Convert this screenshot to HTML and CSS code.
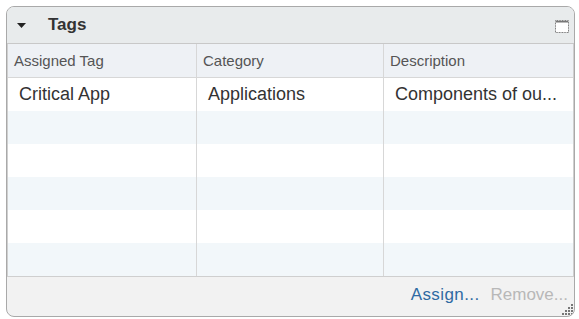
FILE: index.html
```html
<!DOCTYPE html>
<html lang="en">
<head>
  <meta charset="UTF-8">
  <title>Tags</title>
  <link rel="stylesheet" href="styles.css">
</head>
<body>
  <div class="panel">
    <div class="panel-head">
      <svg class="caret" width="9" height="5" viewBox="0 0 9 5"><path d="M0 0h9L4.5 5z" fill="#222"/></svg>
      <span class="title">Tags</span>
      <svg class="max" width="14" height="13" viewBox="0 0 14 13">
        <rect x="0.5" y="0.5" width="13" height="12" fill="#fff" stroke="#777" stroke-dasharray="1 0.6"/>
        <rect x="1" y="1" width="12" height="1.5" fill="#777"/>
      </svg>
    </div>
    <div class="grid">
      <div class="col-head">Assigned Tag</div>
      <div class="col-head">Category</div>
      <div class="col-head">Description</div>

      <div class="cell">Critical App</div>
      <div class="cell">Applications</div>
      <div class="cell">Components of ou...</div>

      <div class="cell alt"></div><div class="cell alt"></div><div class="cell alt"></div>
      <div class="cell"></div><div class="cell"></div><div class="cell"></div>
      <div class="cell alt"></div><div class="cell alt"></div><div class="cell alt"></div>
      <div class="cell"></div><div class="cell"></div><div class="cell"></div>
      <div class="cell alt"></div><div class="cell alt"></div><div class="cell alt"></div>
    </div>
    <div class="panel-foot">
      <a class="action">Assign...</a>
      <span class="action disabled">Remove...</span>
      <svg class="grip" width="12" height="12" viewBox="0 0 12 12" fill="#777">
        <rect x="10" y="1" width="2" height="2"/>
        <rect x="7" y="4" width="2" height="2"/><rect x="10" y="4" width="2" height="2"/>
        <rect x="4" y="7" width="2" height="2"/><rect x="7" y="7" width="2" height="2"/><rect x="10" y="7" width="2" height="2"/>
        <rect x="1" y="10" width="2" height="2"/><rect x="4" y="10" width="2" height="2"/><rect x="7" y="10" width="2" height="2"/><rect x="10" y="10" width="2" height="2"/>
      </svg>
    </div>
  </div>
</body>
</html>
```

FILE: styles.css
```css
body {
  margin: 0;
  padding: 6px 0 0 6px;
  background: #fff;
  font-family: "Liberation Sans", Arial, sans-serif;
  color: #333;
}
.panel {
  width: 567px;
  border: 1px solid #a9a9a9;
  border-radius: 8px;
  overflow: hidden;
  background: #f2f2f2;
}
.panel-head {
  height: 36px;
  display: flex;
  align-items: center;
  background: #e8ebec;
  border-bottom: 1px solid #c8c8c8;
  padding: 0 5px 0 10px;
}
.caret {
  margin-top: 1px;
}
.title {
  font-size: 17px;
  font-weight: bold;
  color: #333;
  margin-left: 22px;
  flex: 1;
}
.max {
  margin-top: 2px;
}
.grid {
  display: grid;
  grid-template-columns: 189px 187px 1fr;
  border-left: 1px solid #cfcfcf;
  border-right: 1px solid #cfcfcf;
  border-bottom: 1px solid #cfcfcf;
  background: #fff;
}
.col-head {
  height: 33px;
  line-height: 34px;
  font-size: 15px;
  color: #555;
  padding-left: 6px;
  background: #eef1f5;
  border-bottom: 1px solid #d7d7d7;
  border-right: 1px solid #d7d7d7;
}
.cell {
  height: 33px;
  line-height: 32px;
  font-size: 18px;
  color: #333;
  padding-left: 11px;
  border-right: 1px solid #d7d7d7;
  white-space: nowrap;
  overflow: hidden;
}
.col-head:nth-child(3n), .cell:nth-child(3n) {
  border-right: none;
}
.cell.alt {
  background: #f2f7fa;
}
.panel-foot {
  height: 39px;
  display: flex;
  align-items: center;
  justify-content: flex-end;
  gap: 11px;
  padding-right: 6px;
  position: relative;
}
.action {
  font-size: 17px;
  letter-spacing: 0.4px;
  color: #2f6aa3;
  margin-bottom: 3px;
}
.action.disabled {
  color: #b8b8b8;
  letter-spacing: 0;
}
.grip {
  position: absolute;
  right: 1px;
  bottom: 1px;
}
```
